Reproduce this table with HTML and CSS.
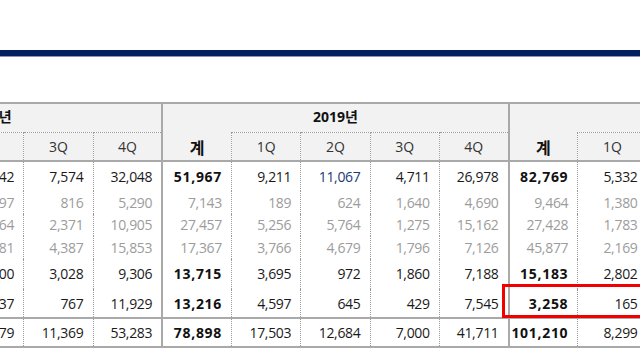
FILE: index.html
```html
<!DOCTYPE html>
<html lang="ko">
<head>
    <meta charset="UTF-8">
    <meta name="viewport" content="width=device-width, initial-scale=1.0">
    <title>분기별 실적</title>
    <link rel="stylesheet" href="styles.css">
</head>
<body>
    <div class="top-bar"></div>

    <div class="sheet">
        <table class="sales">
            <colgroup>
                <col><col><col><col><col>
                <col><col><col><col><col>
                <col><col><col><col><col>
            </colgroup>
            <thead>
                <tr class="year-row">
                    <th colspan="5" class="grp">2018년</th>
                    <th colspan="5" class="grp">2019년</th>
                    <th colspan="5" class="grp"></th>
                </tr>
                <tr class="q-row">
                    <th class="grp sum">계</th><th>1Q</th><th>2Q</th><th>3Q</th><th>4Q</th>
                    <th class="grp sum">계</th><th>1Q</th><th>2Q</th><th>3Q</th><th>4Q</th>
                    <th class="grp sum">계</th><th>1Q</th><th></th><th></th><th></th>
                </tr>
            </thead>
            <tbody>
                <tr class="r-main">
                    <td class="grp"></td><td></td><td>42</td><td>7,574</td><td>32,048</td>
                    <td class="grp b">51,967</td><td>9,211</td><td class="blue">11,067</td><td>4,711</td><td>26,978</td>
                    <td class="grp b">82,769</td><td>5,332</td><td></td><td></td><td></td>
                </tr>
                <tr class="r-sub">
                    <td class="grp"></td><td></td><td>97</td><td>816</td><td>5,290</td>
                    <td class="grp">7,143</td><td>189</td><td>624</td><td>1,640</td><td>4,690</td>
                    <td class="grp">9,464</td><td>1,380</td><td></td><td></td><td></td>
                </tr>
                <tr class="r-sub">
                    <td class="grp"></td><td></td><td>64</td><td>2,371</td><td>10,905</td>
                    <td class="grp">27,457</td><td>5,256</td><td>5,764</td><td>1,275</td><td>15,162</td>
                    <td class="grp">27,428</td><td>1,783</td><td></td><td></td><td></td>
                </tr>
                <tr class="r-sub">
                    <td class="grp"></td><td></td><td>81</td><td>4,387</td><td>15,853</td>
                    <td class="grp">17,367</td><td>3,766</td><td>4,679</td><td>1,796</td><td>7,126</td>
                    <td class="grp">45,877</td><td>2,169</td><td></td><td></td><td></td>
                </tr>
                <tr class="r-five">
                    <td class="grp"></td><td></td><td>00</td><td>3,028</td><td>9,306</td>
                    <td class="grp b">13,715</td><td>3,695</td><td>972</td><td>1,860</td><td>7,188</td>
                    <td class="grp b">15,183</td><td>2,802</td><td></td><td></td><td></td>
                </tr>
                <tr class="r-six">
                    <td class="grp"></td><td></td><td>37</td><td>767</td><td>11,929</td>
                    <td class="grp b">13,216</td><td>4,597</td><td>645</td><td>429</td><td>7,545</td>
                    <td class="grp b">3,258</td><td>165</td><td></td><td></td><td></td>
                </tr>
                <tr class="r-total">
                    <td class="grp"></td><td></td><td>79</td><td>11,369</td><td>53,283</td>
                    <td class="grp b">78,898</td><td>17,503</td><td>12,684</td><td>7,000</td><td>41,711</td>
                    <td class="grp b">101,210</td><td>8,299</td><td></td><td></td><td></td>
                </tr>
            </tbody>
        </table>
        <div class="highlight"></div>
    </div>
</body>
</html>
```

FILE: styles.css
```css
body {
    margin: 0;
    width: 640px;
    height: 360px;
    overflow: hidden;
    background: #fff;
    font-family: "Open Sans", "Noto Sans CJK KR", sans-serif;
    color: #1a1a1a;
}
.top-bar {
    margin-top: 50px;
    height: 6px;
    background: #002060;
    border-bottom: 1px solid #8b94b3;
}
.sheet {
    position: relative;
    margin-top: 45px;
}
.sales {
    margin-left: -185px;
    width: 1039px;
    table-layout: fixed;
    border-collapse: collapse;
    border-top: 2px solid #a9a9a9;
    border-bottom: 2px solid #a9a9a9;
    font-size: 14px;
    letter-spacing: -0.3px;
}
.sales col {
    width: 69.25px;
}
.sales th, .sales td {
    padding: 0 9px 0 0;
    border-left: 1px dotted #9a9a9a;
    white-space: nowrap;
    overflow: hidden;
}
.sales .grp {
    border-left: 2px solid #a9a9a9;
}
.sales th {
    background: #f2f2f2;
    color: #333;
    font-weight: normal;
    text-align: center;
    padding: 0;
    letter-spacing: 0;
}
.year-row {
    height: 29px;
}
.year-row th {
    font-weight: bold;
    font-size: 14px;
    color: #111;
    padding-bottom: 3px;
}
.q-row {
    height: 29px;
}
.q-row th {
    border-top: 1px dotted #9a9a9a;
    border-bottom: 2px solid #a9a9a9;
    padding-top: 1px;
}
.q-row th.sum {
    border-top: none;
    font-weight: bold;
    font-size: 16px;
    color: #111;
}
.sales td {
    text-align: right;
}
.sales td.b {
    font-weight: bold;
    letter-spacing: 0.7px;
    color: #111;
}
.sales td.blue {
    color: #203a78;
}
.r-main {
    height: 30px;
}
.r-sub {
    height: 22.5px;
    color: #9c9c9c;
}
.r-five {
    height: 30.5px;
}
.r-six {
    height: 29px;
}
.r-total {
    height: 29px;
}
.r-total td {
    border-top: 2px solid #a9a9a9;
}
.highlight {
    position: absolute;
    left: 502px;
    top: 182px;
    width: 160px;
    height: 28px;
    border: 3px solid #f20000;
}
```
